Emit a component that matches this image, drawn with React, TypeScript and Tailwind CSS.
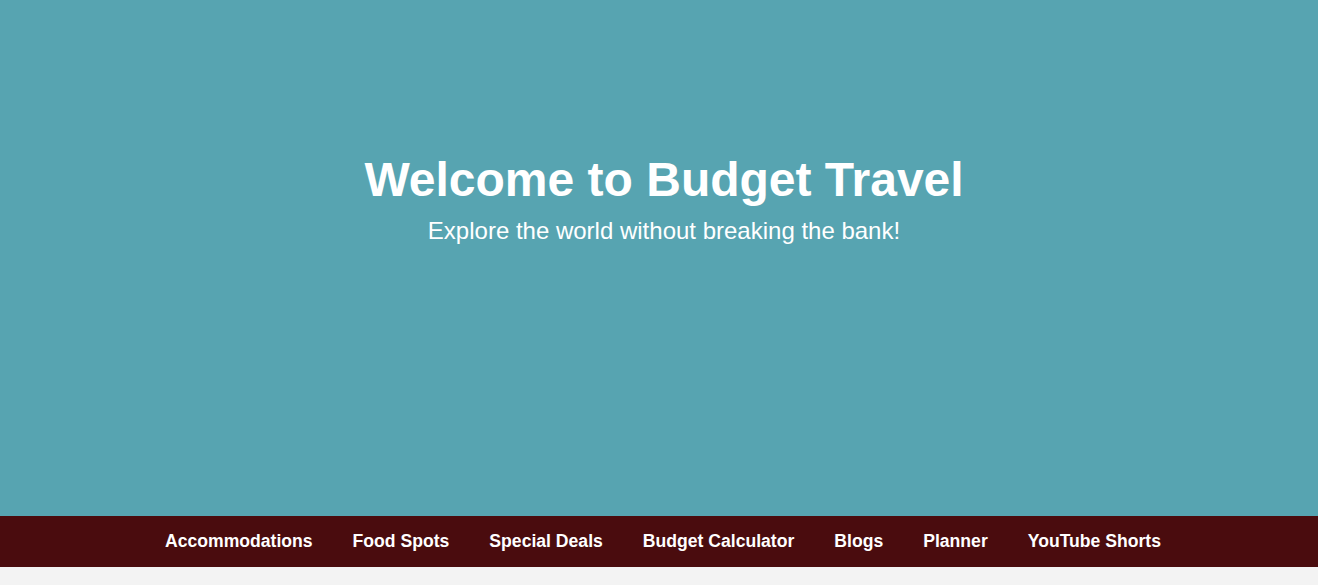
const links = [
  "Accommodations",
  "Food Spots",
  "Special Deals",
  "Budget Calculator",
  "Blogs",
  "Planner",
  "YouTube Shorts",
];

const App = () => {
  return (
    <div className="min-h-screen bg-[#f3f3f3] font-['Liberation_Sans',Arial,sans-serif] text-white">
      <header className="flex h-[516px] flex-col items-center bg-[#57a4b1] pt-[152px] pl-[10px] text-center">
        <h1 className="mb-[10px] text-[48px] leading-[1.15] font-bold">
          Welcome to Budget Travel
        </h1>
        <p className="text-[24px] leading-[1.15]">
          Explore the world without breaking the bank!
        </p>
      </header>

      <nav className="flex justify-center gap-[40px] bg-[#4a0c0e] py-[15px] pl-[8px]">
        {links.map((link) => (
          <a
            key={link}
            href="#"
            className="text-[17.6px] leading-[21px] font-bold text-white"
          >
            {link}
          </a>
        ))}
      </nav>
    </div>
  );
};

export default App;
